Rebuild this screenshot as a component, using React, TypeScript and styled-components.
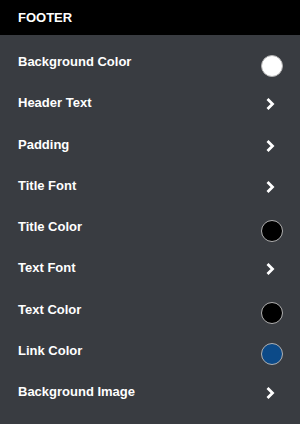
import React from 'react'
import styled, { createGlobalStyle } from 'styled-components'

const GlobalStyle = createGlobalStyle`
  body {
    margin: 0;
    background: #393c41;
    font-family: 'Liberation Sans', Arial, sans-serif;
  }
`

type Item =
  | { label: string; kind: 'color'; color: string }
  | { label: string; kind: 'link' }

const items: Item[] = [
  { label: 'Background Color', kind: 'color', color: '#ffffff' },
  { label: 'Header Text', kind: 'link' },
  { label: 'Padding', kind: 'link' },
  { label: 'Title Font', kind: 'link' },
  { label: 'Title Color', kind: 'color', color: '#000000' },
  { label: 'Text Font', kind: 'link' },
  { label: 'Text Color', kind: 'color', color: '#000000' },
  { label: 'Link Color', kind: 'color', color: '#0c4a88' },
  { label: 'Background Image', kind: 'link' },
]

const Chevron = () => (
  <svg width="10" height="14" viewBox="0 0 10 14">
    <path d="M2.5 2 L7.5 7 L2.5 12" fill="none" stroke="#fff" strokeWidth="2.8" />
  </svg>
)

const App: React.FC = () => {
  return (
    <>
      <GlobalStyle />
      <StyledPanel>
        <StyledHeader>FOOTER</StyledHeader>
        <StyledList>
          {items.map((item) => (
            <StyledRow key={item.label}>
              <StyledLabel>{item.label}</StyledLabel>
              {item.kind === 'color' ? <StyledSwatch color={item.color} /> : <Chevron />}
            </StyledRow>
          ))}
        </StyledList>
      </StyledPanel>
    </>
  )
}

const StyledPanel = styled.div`
  width: 300px;
  height: 424px;
  background: #393c41;
  display: flex;
  flex-direction: column;
`

const StyledHeader = styled.div`
  height: 35px;
  background: #000;
  color: #fff;
  font-size: 13px;
  font-weight: 700;
  display: flex;
  align-items: center;
  padding-left: 18px;
`

const StyledList = styled.div`
  display: flex;
  flex-direction: column;
  padding-top: 6px;
`

const StyledRow = styled.div`
  height: 41.25px;
  display: flex;
  align-items: center;
  justify-content: space-between;
  padding: 0 18px;
  & > svg {
    margin-right: 7px;
    margin-top: 3px;
  }
`

const StyledLabel = styled.span`
  color: #fff;
  font-size: 13px;
  font-weight: 700;
`

const StyledSwatch = styled.span<{ color: string }>`
  box-sizing: border-box;
  width: 22px;
  height: 22px;
  border-radius: 50%;
  background: ${(props) => props.color};
  border: 1.5px solid #b0b0b0;
  margin-top: 8px;
  margin-right: -1px;
`

export default App
